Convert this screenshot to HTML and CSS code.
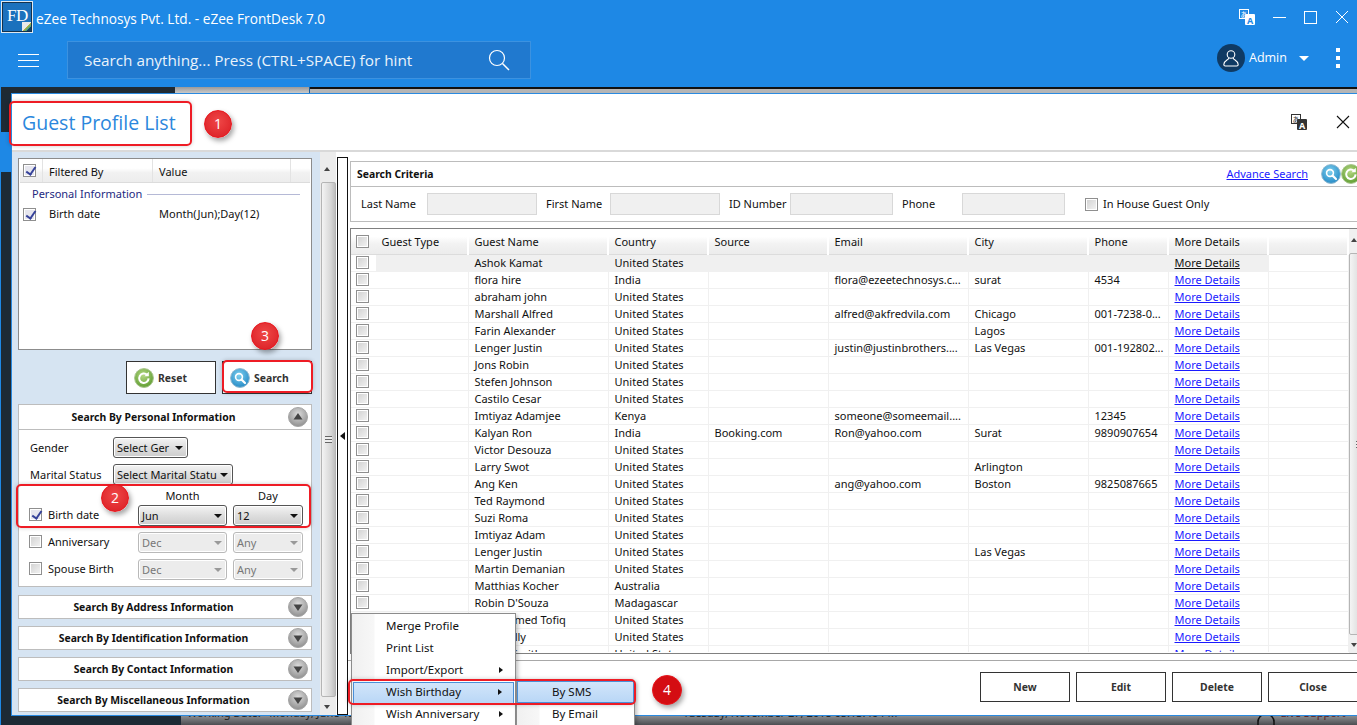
FILE: index.html
```html
<!DOCTYPE html>
<html lang="en">
<head>
<meta charset="utf-8">
<title>eZee FrontDesk 7.0 - Guest Profile List</title>
<link rel="stylesheet" href="styles.css">
</head>
<body>
<svg class="defs" width="0" height="0" aria-hidden="true">
  <defs>
    <radialGradient id="blueBall" cx="45%" cy="35%" r="70%"><stop offset="0" stop-color="#7fd0ee"/><stop offset="1" stop-color="#1f86c4"/></radialGradient>
    <radialGradient id="greenBall" cx="45%" cy="35%" r="70%"><stop offset="0" stop-color="#b5d884"/><stop offset="1" stop-color="#5a9a2c"/></radialGradient>
    <radialGradient id="greyBall" cx="50%" cy="35%" r="70%"><stop offset="0" stop-color="#dcdcdc"/><stop offset="1" stop-color="#8a8a8a"/></radialGradient>
    <symbol id="i-search-ball" viewBox="0 0 20 20"><circle cx="10" cy="10" r="9.4" fill="url(#blueBall)" stroke="#8fb8cf" stroke-width="1"/><circle cx="9" cy="9" r="3.4" fill="none" stroke="#fff" stroke-width="1.6"/><path d="M11.5 11.5L15 15" stroke="#fff" stroke-width="2.2" stroke-linecap="round"/></symbol>
    <symbol id="i-reset-ball" viewBox="0 0 20 20"><circle cx="10" cy="10" r="9.4" fill="url(#greenBall)" stroke="#a8c48c" stroke-width="1"/><path d="M14.6 10.4a4.7 4.7 0 1 1-1.5-3.6" fill="none" stroke="#fff" stroke-width="2"/><path d="M14.8 3.8v4.4h-4.4z" fill="#fff"/></symbol>
    <symbol id="i-up" viewBox="0 0 20 20"><circle cx="10" cy="10" r="9.5" fill="url(#greyBall)" stroke="#a5a5a5"/><path d="M5.5 12.5L10 6l4.5 6.500z" fill="#444"/></symbol>
    <symbol id="i-down" viewBox="0 0 20 20"><circle cx="10" cy="10" r="9.5" fill="url(#greyBall)" stroke="#a5a5a5"/><path d="M5.500 7.500L10 14l4.500-6.500z" fill="#444"/></symbol>
  </defs>
</svg>
<div class="app">
  <header class="titlebar">
    <div class="logo">FD<span class="logo-corner"></span></div>
    <div class="app-title">eZee Technosys Pvt. Ltd. - eZee FrontDesk 7.0</div>
    <div class="window-controls">
      <svg class="translate-icon" width="16" height="16" viewBox="0 0 16 16"><rect x="0.500" y="0.500" width="9" height="9" fill="#1e88e5" stroke="#fff"/><text x="5" y="8" class="tr-small">あ</text><rect x="6" y="5" width="10" height="11" rx="1" fill="#fff"/><text x="11" y="14.500" class="tr-a-blue">A</text></svg>
      <svg width="13" height="13" viewBox="0 0 13 13"><path d="M0 6.500H13" stroke="#fff" stroke-width="1"/></svg>
      <svg width="13" height="13" viewBox="0 0 13 13"><rect x="0.500" y="0.500" width="12" height="12" fill="none" stroke="#fff"/></svg>
      <svg width="14" height="14" viewBox="0 0 14 14"><path d="M1 1L13 13M13 1L1 13" stroke="#fff" stroke-width="1"/></svg>
    </div>
  </header>
  <div class="toolbar">
    <button class="hamburger" aria-label="Menu"><span></span><span></span><span></span></button>
    <div class="omnibox">
      <span>Search anything... Press (CTRL+SPACE) for hint</span>
      <svg width="22" height="22" viewBox="0 0 22 22"><circle cx="9" cy="9" r="7.500" fill="none" stroke="#fff" stroke-width="1.200"/><path d="M14.500 14.500L21 21" stroke="#fff" stroke-width="1.500"/></svg>
    </div>
    <div class="user">
      <span class="avatar"><svg width="18" height="18" viewBox="0 0 18 18"><circle cx="9" cy="5.500" r="3.800" fill="none" stroke="#fff" stroke-width="1.100"/><path d="M6.800 9c0 2-5 2.500-5 6.500c0 1 .5 1.500 1.500 1.500h11.400c1 0 1.500-.5 1.500-1.500c0-4-5-4.500-5-6.500" fill="none" stroke="#fff" stroke-width="1.100"/></svg></span>
      <span class="user-name">Admin</span>
      <span class="user-caret"></span>
      <span class="kebab"><i></i><i></i><i></i></span>
    </div>
  </div>
  <div class="stage">
    <div class="tabstrip"><span class="tab-dark"></span><span class="tab-grey"></span><span class="tab-line"></span></div>
    <main class="dialog">
      <div class="dialog-head">
        <h1>Guest Profile List</h1>
        <svg class="translate-icon" width="16" height="16" viewBox="0 0 16 16"><rect x="0.500" y="0.500" width="9" height="9" fill="#fff" stroke="#333"/><text x="5" y="8" class="tr-small dark">あ</text><rect x="6" y="5" width="10" height="11" rx="1" fill="#333"/><text x="11" y="14.500" class="tr-a-white">A</text></svg>
        <svg class="dialog-close" width="14" height="14" viewBox="0 0 14 14"><path d="M1 1L13 13M13 1L1 13" stroke="#111" stroke-width="1.100"/></svg>
      </div>
      <div class="dialog-body">
        <aside class="filters">
          <section class="filter-list">
            <div class="filter-head">
              <span class="fcol-check"><span class="check checked"></span></span>
              <span class="fcol-name">Filtered By</span>
              <span class="fcol-value">Value</span>
              <span class="fcol-rest"></span>
            </div>
            <div class="filter-group"><span>Personal Information</span><i></i></div>
            <div class="filter-row">
              <span class="fcol-check"><span class="check checked"></span></span>
              <span class="fcol-name">Birth date</span>
              <span class="fcol-value">Month(Jun);Day(12)</span>
            </div>
          </section>
          <div class="filter-actions">
            <button class="btn btn-icon"><svg width="20" height="20"><use href="#i-reset-ball"/></svg>Reset</button>
            <button class="btn btn-icon"><svg width="20" height="20"><use href="#i-search-ball"/></svg>Search</button>
          </div>
          <section class="acc open">
            <div class="acc-head"><span>Search By Personal Information</span><svg width="20" height="20"><use href="#i-up"/></svg></div>
            <div class="acc-body">
              <div class="field-row"><label>Gender</label><span class="select sel-gender">Select Ger</span></div>
              <div class="field-row"><label>Marital Status</label><span class="select sel-marital">Select Marital Statu</span></div>
              <div class="date-grid">
                <span></span><span class="date-label">Month</span><span class="date-label">Day</span>
                <label class="date-check"><span class="check checked"></span>Birth date</label><span class="select">Jun</span><span class="select">12</span>
                <label class="date-check"><span class="check"></span>Anniversary</label><span class="select disabled">Dec</span><span class="select disabled">Any</span>
                <label class="date-check"><span class="check"></span>Spouse Birth</label><span class="select disabled">Dec</span><span class="select disabled">Any</span>
              </div>
            </div>
          </section>
          <section class="acc"><div class="acc-head"><span>Search By Address Information</span><svg width="20" height="20"><use href="#i-down"/></svg></div></section>
          <section class="acc"><div class="acc-head"><span>Search By Identification Information</span><svg width="20" height="20"><use href="#i-down"/></svg></div></section>
          <section class="acc"><div class="acc-head"><span>Search By Contact Information</span><svg width="20" height="20"><use href="#i-down"/></svg></div></section>
          <section class="acc"><div class="acc-head"><span>Search By Miscellaneous Information</span><svg width="20" height="20"><use href="#i-down"/></svg></div></section>
        </aside>
        <div class="vscroll side-scroll"><span class="arrow-up"></span><span class="thumb"><i></i></span><span class="arrow-down"></span></div>
        <div class="splitter"><span></span></div>
        <div class="results">
          <section class="criteria">
            <div class="criteria-head"><strong>Search Criteria</strong><a href="#">Advance Search</a><svg width="20" height="20"><use href="#i-search-ball"/></svg><svg width="20" height="20"><use href="#i-reset-ball"/></svg></div>
            <div class="criteria-fields">
              <label class="lbl-last">Last Name</label><span class="input in-last"></span>
              <label class="lbl-first">First Name</label><span class="input in-first"></span>
              <label class="lbl-id">ID Number</label><span class="input in-id"></span>
              <label class="lbl-phone">Phone</label><span class="input in-phone"></span>
              <label class="inhouse"><span class="check"></span>In House Guest Only</label>
            </div>
          </section>
          <section class="grid-wrap">
            <div class="grid-clip">
            <table class="grid">
              <colgroup><col class="c0"><col class="c1"><col class="c2"><col class="c3"><col class="c4"><col class="c5"><col class="c6"><col class="c7"><col class="c8"><col></colgroup>
              <thead><tr><th class="chk"><span class="check"></span></th><th>Guest Type</th><th>Guest Name</th><th>Country</th><th>Source</th><th>Email</th><th>City</th><th>Phone</th><th>More Details</th><th></th></tr></thead>
              <tbody>
                <tr class="selected"><td class="chk"><span class="check"></span></td><td></td><td>Ashok Kamat</td><td>United States</td><td></td><td></td><td></td><td></td><td><a href="#">More Details</a></td><td class="end"></td></tr>
                <tr><td class="chk"><span class="check"></span></td><td></td><td>flora hire</td><td>India</td><td></td><td>flora@ezeetechnosys.c...</td><td>surat</td><td>4534</td><td><a href="#">More Details</a></td><td></td></tr>
                <tr><td class="chk"><span class="check"></span></td><td></td><td>abraham john</td><td>United States</td><td></td><td></td><td></td><td></td><td><a href="#">More Details</a></td><td></td></tr>
                <tr><td class="chk"><span class="check"></span></td><td></td><td>Marshall Alfred</td><td>United States</td><td></td><td>alfred@akfredvila.com</td><td>Chicago</td><td>001-7238-0...</td><td><a href="#">More Details</a></td><td></td></tr>
                <tr><td class="chk"><span class="check"></span></td><td></td><td>Farin Alexander</td><td>United States</td><td></td><td></td><td>Lagos</td><td></td><td><a href="#">More Details</a></td><td></td></tr>
                <tr><td class="chk"><span class="check"></span></td><td></td><td>Lenger Justin</td><td>United States</td><td></td><td>justin@justinbrothers....</td><td>Las Vegas</td><td>001-192802...</td><td><a href="#">More Details</a></td><td></td></tr>
                <tr><td class="chk"><span class="check"></span></td><td></td><td>Jons Robin</td><td>United States</td><td></td><td></td><td></td><td></td><td><a href="#">More Details</a></td><td></td></tr>
                <tr><td class="chk"><span class="check"></span></td><td></td><td>Stefen Johnson</td><td>United States</td><td></td><td></td><td></td><td></td><td><a href="#">More Details</a></td><td></td></tr>
                <tr><td class="chk"><span class="check"></span></td><td></td><td>Castilo Cesar</td><td>United States</td><td></td><td></td><td></td><td></td><td><a href="#">More Details</a></td><td></td></tr>
                <tr><td class="chk"><span class="check"></span></td><td></td><td>Imtiyaz Adamjee</td><td>Kenya</td><td></td><td>someone@someemail....</td><td></td><td>12345</td><td><a href="#">More Details</a></td><td></td></tr>
                <tr><td class="chk"><span class="check"></span></td><td></td><td>Kalyan Ron</td><td>India</td><td>Booking.com</td><td>Ron@yahoo.com</td><td>Surat</td><td>9890907654</td><td><a href="#">More Details</a></td><td></td></tr>
                <tr><td class="chk"><span class="check"></span></td><td></td><td>Victor Desouza</td><td>United States</td><td></td><td></td><td></td><td></td><td><a href="#">More Details</a></td><td></td></tr>
                <tr><td class="chk"><span class="check"></span></td><td></td><td>Larry Swot</td><td>United States</td><td></td><td></td><td>Arlington</td><td></td><td><a href="#">More Details</a></td><td></td></tr>
                <tr><td class="chk"><span class="check"></span></td><td></td><td>Ang Ken</td><td>United States</td><td></td><td>ang@yahoo.com</td><td>Boston</td><td>9825087665</td><td><a href="#">More Details</a></td><td></td></tr>
                <tr><td class="chk"><span class="check"></span></td><td></td><td>Ted Raymond</td><td>United States</td><td></td><td></td><td></td><td></td><td><a href="#">More Details</a></td><td></td></tr>
                <tr><td class="chk"><span class="check"></span></td><td></td><td>Suzi Roma</td><td>United States</td><td></td><td></td><td></td><td></td><td><a href="#">More Details</a></td><td></td></tr>
                <tr><td class="chk"><span class="check"></span></td><td></td><td>Imtiyaz Adam</td><td>United States</td><td></td><td></td><td></td><td></td><td><a href="#">More Details</a></td><td></td></tr>
                <tr><td class="chk"><span class="check"></span></td><td></td><td>Lenger Justin</td><td>United States</td><td></td><td></td><td>Las Vegas</td><td></td><td><a href="#">More Details</a></td><td></td></tr>
                <tr><td class="chk"><span class="check"></span></td><td></td><td>Martin Demanian</td><td>United States</td><td></td><td></td><td></td><td></td><td><a href="#">More Details</a></td><td></td></tr>
                <tr><td class="chk"><span class="check"></span></td><td></td><td>Matthias Kocher</td><td>Australia</td><td></td><td></td><td></td><td></td><td><a href="#">More Details</a></td><td></td></tr>
                <tr><td class="chk"><span class="check"></span></td><td></td><td>Robin D'Souza</td><td>Madagascar</td><td></td><td></td><td></td><td></td><td><a href="#">More Details</a></td><td></td></tr>
                <tr><td class="chk"><span class="check"></span></td><td></td><td>Mohammed Tofiq</td><td>United States</td><td></td><td></td><td></td><td></td><td><a href="#">More Details</a></td><td></td></tr>
                <tr><td class="chk"><span class="check"></span></td><td></td><td>Kelly Kelly</td><td>United States</td><td></td><td></td><td></td><td></td><td><a href="#">More Details</a></td><td></td></tr>
                <tr><td class="chk"><span class="check"></span></td><td></td><td>Martin Smith</td><td>United States</td><td></td><td></td><td></td><td></td><td><a href="#">More Details</a></td><td></td></tr>
              </tbody>
            </table>
            </div>
            <div class="vscroll grid-scroll"><span class="arrow-up"></span><span class="thumb"><i></i></span><span class="arrow-down"></span></div>
          </section>
          <footer class="actions">
            <button class="btn">New</button><button class="btn">Edit</button><button class="btn">Delete</button><button class="btn">Close</button>
          </footer>
        </div>
      </div>
    </main>
    <div class="status">
      <span class="status-rail"></span>
      <div class="status-main">
        <span class="st-work">Working Date:&nbsp;&nbsp;&nbsp;Monday, June 12, 2017</span>
        <span class="st-time">Tuesday, November 27, 2018 05:13:46 PM</span>
        <svg class="st-headset" width="22" height="16" viewBox="0 0 22 16"><path d="M3 10a8 8 0 0 1 16 0M3 8v6M19 8v6M8 14h6" fill="none" stroke="#111" stroke-width="1.500"/></svg>
        <span class="st-live">Live Support</span>
      </div>
    </div>
  </div>
</div>

<nav class="menu menu-main">
  <div class="mi">Merge Profile</div>
  <div class="mi">Print List</div>
  <div class="mi arrow">Import/Export</div>
  <div class="mi arrow hot">Wish Birthday</div>
  <div class="mi arrow">Wish Anniversary</div>
</nav>
<nav class="menu menu-sub">
  <div class="mi hot">By SMS</div>
  <div class="mi">By Email</div>
</nav>

<span class="callout box-1"></span>
<span class="callout box-2"></span>
<span class="callout box-3"></span>
<span class="callout box-4"></span>
<span class="badge badge-1">1</span>
<span class="badge badge-2">2</span>
<span class="badge badge-3">3</span>
<span class="badge badge-4">4</span>
</body>
</html>
```
FILE: styles.css
```css
* { box-sizing: border-box; }
html, body { margin: 0; padding: 0; height: 100%; overflow: hidden; }
body { background: #1e88e5; font: 11px/14px "Noto Sans", "Open Sans", sans-serif; color: #111; position: relative; }
.defs { position: absolute; }
a { color: #1a1aff; text-decoration: underline; }
button { font: inherit; cursor: pointer; }

.app { width: 1357px; height: 725px; display: flex; flex-direction: column; overflow: hidden; }

/* title bar */
.titlebar { height: 38px; flex: none; display: flex; align-items: center; padding: 0 0 4px 1px; color: #fff; }
.logo { width: 32px; height: 32px; background: #1b71bd; border: 1px solid #dfe8f0; outline: 1px solid #12324f; outline-offset: -2px; color: #fff; font: 17px/27px "Liberation Serif", serif; letter-spacing: -.5px; padding-left: 5px; position: relative; flex: none; }
.logo-corner { position: absolute; right: 1px; bottom: 1px; width: 9px; height: 9px; background: linear-gradient(135deg, #e9e9e9 50%, #d9b92a 50%, #2d9a8f 75%, #123f66 75%); }
.app-title { margin: 3px 0 0 3px; font: 13.650px/20px "Open Sans", sans-serif; }
.window-controls { margin-left: auto; display: flex; align-items: center; gap: 18px; padding-right: 8px; }
.tr-small { font: 7px "Noto Sans CJK JP", sans-serif; fill: #fff; text-anchor: middle; }
.tr-small.dark { fill: #333; }
.tr-a-blue, .tr-a-white { font: bold 9px "Noto Sans", sans-serif; text-anchor: middle; }
.tr-a-blue { fill: #1e88e5; }
.tr-a-white { fill: #fff; }

/* toolbar */
.toolbar { height: 49px; flex: none; display: flex; align-items: flex-start; padding-top: 3px; color: #fff; }
.hamburger { width: 67px; height: 38px; padding: 0 0 0 18px; border: 0; background: none; display: flex; flex-direction: column; justify-content: center; gap: 5px; }
.hamburger span { display: block; width: 21px; height: 1px; background: #fff; }
.omnibox { width: 464px; height: 38px; background: #2079cf; border: 1px solid #3c92e0; display: flex; align-items: center; justify-content: space-between; padding: 0 20px 1px 16px; font: 15.300px/20px "Open Sans", sans-serif; color: #eaf3fb; }
.user { margin-left: auto; display: flex; align-items: center; font: 12.500px/16px "Open Sans", sans-serif; padding: 3px 17px 0 0; }
.avatar { width: 28px; height: 28px; border-radius: 50%; background: #0f3a63; display: flex; align-items: center; justify-content: center; }
.user-name { margin-left: 4px; width: 50px; }
.user-caret { width: 0; height: 0; border-left: 5px solid transparent; border-right: 5px solid transparent; border-top: 5px solid #fff; }
.kebab { margin-left: 27px; display: flex; flex-direction: column; gap: 4px; }
.kebab i { display: block; width: 4px; height: 4px; background: #fff; }

/* stage */
.stage { flex: 1; min-height: 0; display: flex; flex-direction: column; border-left: 1px solid #1e88e5; background: linear-gradient(#1d2a35 0, #1d2a35 45px, #1e88e5 45px, #1e88e5 85px, #1d2a35 85px); }
.tabstrip { height: 6px; flex: none; display: flex; }
.tab-dark { width: 174px; background: #1f2a33; }
.tab-grey { width: 135px; background: linear-gradient(#9a9a9a, #c9c9c9); border-right: 1px solid #1a5d9c; }
.tab-line { flex: 1; background: linear-gradient(#111 0, #111 2px, #b5b5b5 2px); }

.dialog { flex: none; height: 623px; margin-left: 10px; background: #fff; border-top: 1px solid #2a8ae0; border-left: 1px solid #2a8ae0; border-bottom: 1px solid #2a8ae0; display: flex; flex-direction: column; position: relative; z-index: 1; }
.dialog-head { height: 58px; flex: none; display: flex; align-items: center; padding-left: 10px; border-bottom: 2px solid #d9d9d9; }
.dialog-head h1 { margin: 2px auto 0 0; font: 19.500px/28px "Open Sans", sans-serif; font-weight: 400; color: #2b87dd; }
.dialog-head .translate-icon { margin-right: 29px; }
.dialog-close { margin-right: 7px; }

.dialog-body { flex: 1; min-height: 0; display: flex; }

/* left filters */
.filters { width: 308px; flex: none; background: #d6e4f2; padding: 6px 8px 0 6px; display: flex; flex-direction: column; }
.filter-list { height: 192px; flex: none; background: #fff; border: 1px solid #8c8c8c; }
.filter-head { height: 24px; display: flex; align-items: center; background: linear-gradient(#fff 0, #fff 40%, #f1f1f1 60%, #ededed); border-bottom: 1px solid #dcdcdc; margin: 0 1px; }
.filter-head > span { height: 100%; display: flex; align-items: center; padding-top: 2px; border-right: 1px solid #e3e3e3; }
.filter-head > .fcol-check { padding-top: 0; }
.fcol-check { width: 23px; padding-left: 3px; flex: none; display: flex; align-items: center; }
.fcol-name { width: 110px; padding-left: 6px; flex: none; }
.fcol-value { width: 138px; padding-left: 6px; flex: none; }
.fcol-rest { flex: 1; border-right: 0 !important; }
.filter-group { display: flex; align-items: center; height: 20px; margin-top: 1px; padding: 0 11px 0 13px; color: #24297f; gap: 5px; }
.filter-group i { flex: 1; height: 1px; background: #b5b9d6; }
.filter-row { height: 20px; display: flex; align-items: center; margin: 0 1px; }

.check { display: inline-block; width: 13px; height: 13px; border: 1px solid #8f8f8f; background: linear-gradient(135deg, #d0d0d0, #f4f4f4); box-shadow: inset 0 0 0 1px #fff; flex: none; position: relative; }
.check.checked { background: #e6e6ee; }
.check.checked::after { content: ""; position: absolute; left: 4px; top: 0; width: 4px; height: 8px; border: solid #36429a; border-width: 0 2px 2px 0; transform: rotate(35deg); }

.filter-actions { height: 54px; flex: none; display: flex; justify-content: flex-end; gap: 6px; align-items: flex-start; padding-top: 11px; }
.btn { width: 90px; height: 33px; background: #fff; border: 1px solid #333; font-weight: 700; font-size: 10.400px; color: #333; padding: 0; }
.btn-icon { display: flex; align-items: center; gap: 4px; padding-left: 7px; }
.btn-icon svg { flex: none; }

.acc { flex: none; background: #fff; border: 1px solid #bdbdbd; margin-bottom: 7px; }
.acc-head { height: 22px; display: flex; align-items: center; padding: 0 3px 0 0; font-weight: 700; font-size: 10.400px; color: #111; }
.acc-head span { flex: 1; text-align: center; }
.acc.open { margin-bottom: 8px; }
.acc.open .acc-head { height: 25px; border-bottom: 1px solid #bdbdbd; }
.acc-body { padding: 7px 8px 6px 11px; }
.field-row { display: flex; align-items: center; height: 21px; margin-bottom: 6px; }
.field-row label { width: 83px; flex: none; }
.select { height: 21px; display: flex; align-items: center; padding: 0 3px; border: 1px solid #555; border-radius: 3px; background: linear-gradient(#f4f4f4, #dedede 50%, #cdcdcd); color: #111; position: relative; box-shadow: inset 0 0 0 1px #fff; white-space: nowrap; overflow: hidden; }
.select::after { content: ""; position: absolute; right: 4px; top: 8px; border-left: 4px solid transparent; border-right: 4px solid transparent; border-top: 4px solid #111; }
.select.disabled { background: #ececec; border-color: #b9b9b9; color: #777; }
.select.disabled::after { border-top-color: #999; }
.sel-gender { width: 75px; }
.sel-marital { width: 120px; }
.date-grid { display: grid; grid-template-columns: 102px 89px 70px; grid-template-rows: 10px 21px 21px 21px; column-gap: 6px; row-gap: 6px; margin-top: -2px; }
.date-label { text-align: center; }
.date-check { display: flex; align-items: center; gap: 6px; margin: 0 0 2px -1px; }

/* scrollbars */
.vscroll { display: flex; flex-direction: column; align-items: center; background: #ececec; }
.side-scroll { width: 16px; flex: none; padding: 6px 0 0; }
.arrow-up { height: 24px; flex: none; position: relative; width: 100%; }
.arrow-up::after { content: ""; position: absolute; left: 4px; top: 9px; border-left: 3.500px solid transparent; border-right: 3.500px solid transparent; border-bottom: 4px solid #444; }
.arrow-down { height: 18px; flex: none; position: relative; width: 100%; }
.arrow-down::after { content: ""; position: absolute; left: 4px; top: 8px; border-left: 3.500px solid transparent; border-right: 3.500px solid transparent; border-top: 4px solid #444; }
.thumb { flex: 1; width: 15px; border: 1px solid #b5b5b5; border-radius: 2px; background: linear-gradient(90deg, #f4f4f4, #d6d6d6 70%, #bfbfbf); display: flex; align-items: center; justify-content: center; }
.thumb i { display: block; width: 7px; height: 7px; background: repeating-linear-gradient(#666 0, #666 1px, #eee 1px, #eee 3px); }

.splitter { width: 11px; flex: none; margin: 5px 0 0 1px; border: 1px solid #111; display: flex; align-items: center; justify-content: center; background: #fff; }
.splitter span { border-top: 4px solid transparent; border-bottom: 4px solid transparent; border-right: 5px solid #111; }

/* right side */
.results { flex: 1; min-width: 0; display: flex; flex-direction: column; padding-top: 9px; overflow: hidden; }
.criteria { flex: none; height: 61px; margin: 0 -4px 0 2px; border: 1px solid #bcbcbc; border-right: 0; }
.criteria-head { height: 25px; display: flex; align-items: center; padding-left: 6px; border-bottom: 1px solid #bcbcbc; }
.criteria-head strong { font-weight: 700; font-size: 10.400px; color: #111; margin-right: auto; }
.criteria-head a { margin-right: 13px; }
.criteria-head svg { flex: none; }
.criteria-fields { height: 34px; display: flex; align-items: center; padding-left: 10px; }
.input { height: 22px; background: #f0f0f0; border: 1px solid #d8d8d8; flex: none; }
.criteria-fields label { flex: none; }
.lbl-last { width: 66px; }
.in-last { width: 110px; margin-right: 9px; }
.lbl-first { width: 64px; }
.in-first { width: 110px; margin-right: 9px; }
.lbl-id { width: 61px; }
.in-id { width: 103px; margin-right: 9px; }
.lbl-phone { width: 60px; }
.in-phone { width: 103px; margin-right: 20px; }
.inhouse { display: flex; align-items: center; gap: 5px; }

.grid-wrap { flex: none; height: 426px; margin: 6px 0 0 2px; border-top: 1px solid #808080; border-left: 1px solid #808080; border-bottom: 1px solid #808080; display: flex; background: #fff; }
.grid-clip { flex: 1; min-width: 0; overflow: hidden; margin-bottom: 1px; }
.grid { width: 998px; table-layout: fixed; border-collapse: collapse; }
.c0 { width: 25px; } .c1 { width: 92px; } .c2 { width: 140px; } .c3 { width: 100px; } .c4 { width: 120px; }
.c5 { width: 140px; } .c6 { width: 120px; } .c7 { width: 80px; } .c8 { width: 100px; }
.grid th { height: 25px; padding: 1px 0 0 5.500px; font-weight: 400; text-align: left; background: linear-gradient(#fff 0, #fff 30%, #f2f2f2 60%, #ececec); border-right: 2px solid #fff; border-bottom: 1px solid #dcdcdc; white-space: nowrap; }
.grid td { height: 17px; padding: 0 0 0 6px; border-right: 1px solid #f0f0f0; border-bottom: 1px solid #f0f0f0; white-space: nowrap; overflow: hidden; line-height: 14px; }
.grid .chk { padding: 0 0 0 5px; border-right: 0; }
.grid .check { vertical-align: middle; display: block; }
.selected td { background: #f0f0f0; }
.selected .chk, .selected .end { background: #fff; }
.selected a { color: #111; }
.grid-scroll { width: 8px; flex: none; overflow: hidden; align-items: flex-start; background: #f0f0f0; }
.grid-scroll .thumb { width: 20px; }
.grid-scroll .arrow-up::after { left: 2px; }
.grid-scroll .arrow-down::after { left: 2px; }

.actions { flex: 1; margin: 6px -1px 0 0; border-top: 1px solid #a8a8a8; display: flex; justify-content: flex-end; gap: 6px; padding-top: 11px; align-items: flex-start; }
.actions .btn { height: 30px; }

/* status strip */
.status { flex: 1; min-height: 0; display: flex; align-items: flex-end; }
.status-rail { width: 180px; flex: none; }
.status-main { flex: 1; height: 100%; background: linear-gradient(#8a8c8f, #4c4e52); position: relative; display: flex; align-items: flex-end; color: #222; }
.st-work, .st-time, .st-live { position: relative; top: -5px; white-space: nowrap; }
.st-work { margin-left: 6px; width: 496px; }
.st-headset { position: relative; margin-left: 357px; top: 3px; flex: none; }
.st-live { margin-left: 4px; color: #5a2020; }

/* floating context menus */
.menu { position: absolute; z-index: 5; background: linear-gradient(90deg, #f0f0f0 0, #f7f7f7 22px, #fff 23px); border: 1px solid #8c8c8c; border-bottom: 0; box-shadow: 2px 2px 4px rgba(0,0,0,.25); font-size: 11.500px; }
.menu-main { left: 351px; top: 613px; width: 165px; height: 112px; padding-top: 2px; }
.menu-sub { left: 516px; top: 681px; width: 119px; height: 44px; border-top: 0; }
.mi { height: 22px; line-height: 22px; padding-left: 34px; position: relative; white-space: nowrap; }
.menu-main .mi { line-height: 20px; }
.menu-sub .mi { padding-left: 35px; }
.mi.arrow::after { content: ""; position: absolute; right: 12px; top: 7px; border-top: 3.500px solid transparent; border-bottom: 3.500px solid transparent; border-left: 4px solid #111; }
.mi.hot { background: linear-gradient(#d3e6fa, #b8d6f6); box-shadow: inset 0 0 0 1px #4a90d9; }
.menu-main .hot { margin: 0 1px; padding-left: 33px; }

/* annotations */
.callout { position: absolute; z-index: 6; border: 2px solid #ee1c25; border-radius: 5px; box-shadow: 0 0 4px rgba(0,0,0,.2); pointer-events: none; }
.box-1 { left: 9px; top: 101px; width: 183px; height: 45px; }
.box-2 { left: 16px; top: 484px; width: 295px; height: 44px; }
.box-3 { left: 222px; top: 360px; width: 91px; height: 33px; }
.box-4 { left: 348px; top: 679px; width: 288px; height: 26px; }
.badge { position: absolute; z-index: 7; width: 28px; height: 28px; border-radius: 50%; background: radial-gradient(circle at 50% 40%, #ef4747, #d91c22); border: 1px solid #e8151c; box-shadow: 2px 3px 5px rgba(0,0,0,.35); color: #fff; font: 14px/26px "Open Sans", sans-serif; text-align: center; }
.badge-1 { left: 204px; top: 110px; }
.badge-2 { left: 101px; top: 484px; }
.badge-3 { left: 251px; top: 322px; }
.badge-4 { left: 652px; top: 675px; width: 30px; height: 30px; line-height: 28px; background: #d40d12; }
```
